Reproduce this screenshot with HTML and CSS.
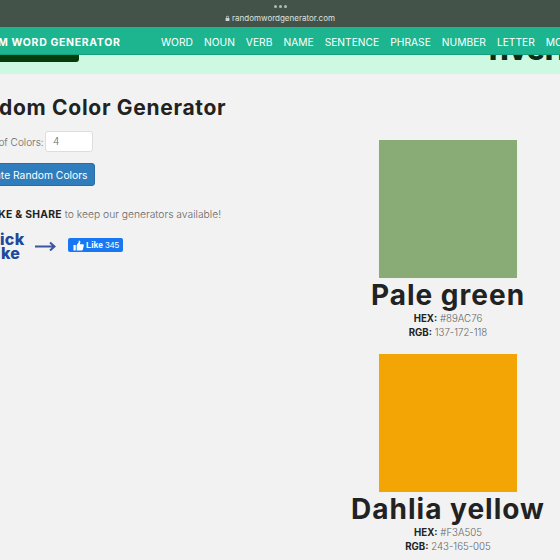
FILE: index.html
```html
<!DOCTYPE html>
<html lang="en">
<head>
<meta charset="utf-8">
<title>Random Color Generator</title>
<link rel="stylesheet" href="styles.css">
</head>
<body>
<div class="statusbar">
  <div class="dots"><span></span><span></span><span></span></div>
  <div class="url"><svg class="lock" viewBox="0 0 8 10" width="5" height="7"><path d="M2 4V2.600a2 2 0 0 1 4 0V4h1v5H1V4zm1 0h2V2.600a1 1 0 0 0-2 0z" fill="#cfd6d2"/></svg>randomwordgenerator.com</div>
</div>
<nav class="nav">
  <div class="brand">M WORD GENERATOR</div>
  <div class="links">
    <span>WORD</span><span>NOUN</span><span>VERB</span><span>NAME</span><span>SENTENCE</span><span>PHRASE</span><span>NUMBER</span><span>LETTER</span><span>MORE</span>
  </div>
</nav>
<div class="banner">
  <div class="ad-button"></div>
  <div class="ad-word">fiverr</div>
</div>
<main class="content">
  <section class="left">
    <h1>Random Color Generator</h1>
    <div class="field"><label>Number of Colors:</label><span class="input">4</span></div>
    <button class="generate">Generate Random Colors</button>
    <p class="share"><b>LIKE &amp; SHARE</b> to keep our generators available!</p>
    <div class="like-row">
      <div class="click">Click<br>Like</div>
      <svg class="arrow" width="21" height="12" viewBox="0 0 21 12"><path d="M0 7.500h19M15 3.500l4.500 4-4.500 4" fill="none" stroke="#3b55a0" stroke-width="2"/></svg>
      <div class="fb"><svg width="11" height="11" viewBox="0 0 12 12"><path d="M0.500 5.500h2.500v6h-2.500zM4 5.500l2.200-3V0.500c1.300 0 2 1 1.800 2.200L7.500 4.500h3.300c0.800 0 1.200 0.700 1 1.400l-1.100 4.700c-0.200 0.600-0.600 0.900-1.200 0.900H4z" fill="#fff"/></svg><b>Like</b> 345</div>
    </div>
  </section>
  <section class="right">
    <article class="color">
      <div class="swatch green"></div>
      <h2>Pale green</h2>
      <p><b>HEX:</b> #89AC76</p>
      <p><b>RGB:</b> 137-172-118</p>
    </article>
    <article class="color">
      <div class="swatch yellow"></div>
      <h2>Dahlia yellow</h2>
      <p><b>HEX:</b> #F3A505</p>
      <p><b>RGB:</b> 243-165-005</p>
    </article>
  </section>
</main>
</body>
</html>
```
FILE: styles.css
```css
* { box-sizing: border-box; }
html, body { margin: 0; height: 560px; overflow: hidden; }
body { width: 560px; background: #f2f2f2; font-family: Inter, "Liberation Sans", sans-serif; color: #666; }
.statusbar { height: 27px; background: #445349; display: flex; flex-direction: column; align-items: center; padding-top: 4px; }
.dots { display: flex; gap: 2px; height: 8px; }
.dots span { width: 3px; height: 3px; border-radius: 50%; background: #b4bab6; margin-top: 1px; }
.url { font-size: 8px; line-height: 11px; color: #dde2df; margin-top: 1px; display: flex; align-items: center; gap: 2px; }
.nav { height: 28px; padding-top: 3px; background: #1db58f; border-bottom: 1px solid #14a07e; display: flex; align-items: center; white-space: nowrap; overflow: hidden; color: #fff; }
.brand { font-size: 10.500px; font-weight: 700; letter-spacing: 0.650px; width: 163px; margin-left: -2px; flex: none; }
.links { display: flex; gap: 11px; font-size: 10.250px; flex: none; }
.banner { height: 19px; background: #cdf9e3; display: flex; justify-content: space-between; overflow: hidden; }
.ad-button { width: 79px; height: 7px; background: #033d0a; border-radius: 0 0 3px 0; }
.ad-word { font-size: 30px; line-height: 20px; font-weight: 800; color: #0c2a14; margin-top: -16px; margin-right: -10px; }
.content { display: flex; }
.left { width: 340px; flex: none; margin-left: -42px; padding-top: 21px; white-space: nowrap; }
h1 { margin: 0; font-size: 21px; line-height: 26px; font-weight: 700; letter-spacing: 0.700px; color: #222; }
.field { display: flex; align-items: center; gap: 2px; margin-top: 10px; font-size: 10px; font-weight: 300; }
.field label { width: 85px; text-align: right; }
.input { width: 48px; height: 21px; background: #fff; border: 1px solid #ddd; border-radius: 3px; padding-left: 7px; line-height: 19px; }
.generate { display: block; margin-top: 11px; width: 137px; height: 23px; padding: 0; text-align: center; background: #2f7dbd; border: 1px solid #2a6da5; border-radius: 3px; color: #fff; font: 10.300px Inter, "Liberation Sans", sans-serif; }
.share { margin: 21px 0 0 31px; font-size: 10.300px; line-height: 14px; font-weight: 300; }
.share b { color: #222; font-weight: 700; letter-spacing: 0.300px; }
.like-row { display: flex; align-items: center; margin-top: 9px; }
.click { font-size: 16px; line-height: 13.500px; font-weight: 800; letter-spacing: 0.300px; color: #23479a; width: 66px; padding: 3px 0 0 25px; text-align: center; flex: none; }
.arrow { margin-left: 11px; }
.fb { margin-left: 12px; width: 55px; height: 14px; background: #1877f2; border-radius: 2px; color: #fff; font: 8.500px/14px "Liberation Sans", sans-serif; display: flex; align-items: center; gap: 2px; padding-left: 5px; }
.right { margin-left: 50px; padding-top: 66px; width: 200px; flex: none; }
.color { display: flex; flex-direction: column; align-items: center; height: 214px; }
.swatch { width: 138px; height: 138px; flex: none; }
.green { background: #89ac76; }
.yellow { background: #f3a505; }
h2 { margin: 0; font-size: 28px; line-height: 34px; font-weight: 700; letter-spacing: 1px; color: #222; white-space: nowrap; }
.color p { margin: 0; font-size: 9.700px; line-height: 14px; white-space: nowrap; font-weight: 300; }
.color p b { color: #222; font-weight: 700; }
```
